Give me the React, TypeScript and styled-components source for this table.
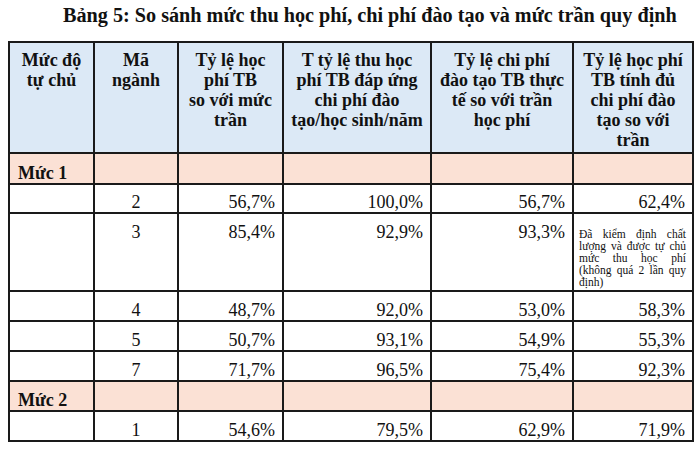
import React from "react";
import styled, { createGlobalStyle } from "styled-components";

const Global = createGlobalStyle`
  html, body { margin: 0; padding: 0; background: #ffffff; }
  body, table, th, td { font-family: "Liberation Serif", "Times New Roman", serif; color: #111111; }
`;

const Page = styled.div`
  width: 700px;
  height: 450px;
  padding: 0 8px;
  box-sizing: border-box;
  overflow: hidden;
`;

const Title = styled.h1`
  margin: 0;
  padding: 3px 0 0 55px;
  height: 41px;
  box-sizing: border-box;
  font-family: "Liberation Serif", "Times New Roman", serif;
  font-size: 20.2px;
  line-height: 24px;
  font-weight: 700;
  white-space: nowrap;
  color: #111111;
`;

const Table = styled.table`
  width: 684px;
  border-collapse: collapse;
  table-layout: fixed;
  border: 2px solid #1a1a1a;
  font-family: "Liberation Serif", "Times New Roman", serif;
`;

const Row = styled.tr<{ $h: number }>`
  height: ${(p) => p.$h}px;
`;

const HeadCell = styled.th`
  background: #dce9f6;
  border: 2px solid #1a1a1a;
  font-family: "Liberation Serif", "Times New Roman", serif;
  font-size: 18px;
  line-height: 20px;
  font-weight: 700;
  text-align: center;
  vertical-align: top;
  padding: 7px 2px 0;
`;

const GroupCell = styled.td`
  background: #fbe1d5;
  border: 2px solid #1a1a1a;
  font-family: "Liberation Serif", "Times New Roman", serif;
  font-size: 18px;
  line-height: 20px;
  font-weight: 700;
  text-align: left;
  vertical-align: bottom;
  padding: 0 8px 0;
`;

const Cell = styled.td<{ $align?: "center" | "right"; $top?: boolean }>`
  border: 2px solid #1a1a1a;
  font-family: "Liberation Serif", "Times New Roman", serif;
  font-size: 18px;
  line-height: 20px;
  text-align: ${(p) => p.$align ?? "right"};
  vertical-align: ${(p) => (p.$top ? "top" : "bottom")};
  padding: ${(p) => (p.$top ? "8px 7px 0" : "0 7px 0")};
`;

const NoteCell = styled.td`
  border: 2px solid #1a1a1a;
  font-family: "Liberation Serif", "Times New Roman", serif;
  font-size: 11.5px;
  line-height: 12px;
  text-align: justify;
  vertical-align: bottom;
  padding: 0 6px 2px 5px;
`;

const NoteText = styled.div`
  display: block;
  font-size: 11.5px;
  line-height: 12px;
`;

type DataRow = { code: string; v: string[]; note?: string; h: number };

const groups: { name: string; rows: DataRow[] }[] = [
  {
    name: "Mức 1",
    rows: [
      { code: "2", v: ["56,7%", "100,0%", "56,7%", "62,4%"], h: 29 },
      {
        code: "3",
        v: ["85,4%", "92,9%", "93,3%"],
        note: "Đã kiểm định chất lượng và được tự chủ mức thu học phí (không quá 2 lần quy định)",
        h: 78,
      },
      { code: "4", v: ["48,7%", "92,0%", "53,0%", "58,3%"], h: 30 },
      { code: "5", v: ["50,7%", "93,1%", "54,9%", "55,3%"], h: 30 },
      { code: "7", v: ["71,7%", "96,5%", "75,4%", "92,3%"], h: 30 },
    ],
  },
  {
    name: "Mức 2",
    rows: [{ code: "1", v: ["54,6%", "79,5%", "62,9%", "71,9%"], h: 30 }],
  },
];

const headers = [
  ["Mức độ", "tự chủ"],
  ["Mã", "ngành"],
  ["Tỷ lệ học", "phí TB", "so với mức", "trần"],
  ["T tỷ lệ thu học", "phí TB đáp ứng", "chi phí đào", "tạo/học sinh/năm"],
  ["Tỷ lệ chi phí", "đào tạo TB thực", "tế so với trần", "học phí"],
  ["Tỷ lệ học phí", "TB tính đủ", "chi phí đào", "tạo so với", "trần"],
];

const widths = [85, 84, 105, 148, 142, 120];

export default function App() {
  return (
    <Page>
      <Global />
      <Title>Bảng 5: So sánh mức thu học phí, chi phí đào tạo và mức trần quy định</Title>
      <Table>
        <colgroup>
          {widths.map((w, i) => (
            <col key={i} style={{ width: w }} />
          ))}
        </colgroup>
        <thead>
          <Row $h={111}>
            {headers.map((lines, i) => (
              <HeadCell key={i}>
                {lines.map((l, j) => (
                  <React.Fragment key={j}>
                    {l}
                    {j < lines.length - 1 && <br />}
                  </React.Fragment>
                ))}
              </HeadCell>
            ))}
          </Row>
        </thead>
        <tbody>
          {groups.map((g) => (
            <React.Fragment key={g.name}>
              <Row $h={g.name === "Mức 1" ? 31 : 30}>
                <GroupCell>{g.name}</GroupCell>
                <GroupCell />
                <GroupCell />
                <GroupCell />
                <GroupCell />
                <GroupCell />
              </Row>
              {g.rows.map((r) => {
                const top = !!r.note;
                return (
                  <Row $h={r.h} key={r.code}>
                    <Cell $top={top} />
                    <Cell $align="center" $top={top}>{r.code}</Cell>
                    {r.v.map((x, i) => (
                      <Cell key={i} $top={top}>{x}</Cell>
                    ))}
                    {r.note && (
                      <NoteCell>
                        <NoteText>{r.note}</NoteText>
                      </NoteCell>
                    )}
                  </Row>
                );
              })}
            </React.Fragment>
          ))}
        </tbody>
      </Table>
    </Page>
  );
}
